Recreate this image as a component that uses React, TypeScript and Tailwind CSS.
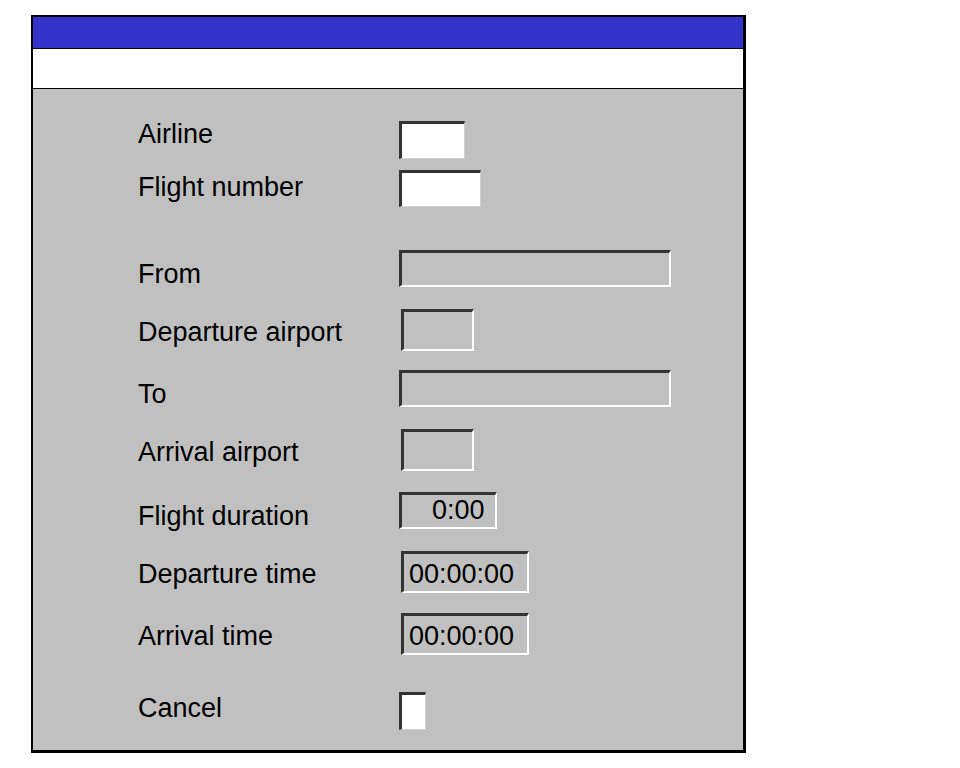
import React from "react";

type Row = {
  label: string;
  h: number;
  lt: number;
  it: number;
  ih: number;
  iw: number;
  ix: number;
  kind: "white" | "grey";
  text?: string;
  textCls?: string;
};

const rows: Row[] = [
  { label: "Airline", h: 70, lt: 30, it: 32, ih: 38, iw: 66, ix: 0, kind: "white" },
  { label: "Flight number", h: 48, lt: 13, it: 11, ih: 37, iw: 82, ix: 0, kind: "white" },
  { label: "From", h: 80, lt: 52, it: 43, ih: 37, iw: 272, ix: 0, kind: "grey" },
  { label: "Departure airport", h: 64, lt: 30, it: 22, ih: 42, iw: 73, ix: 2, kind: "grey" },
  { label: "To", h: 56, lt: 28, it: 19, ih: 37, iw: 272, ix: 0, kind: "grey" },
  { label: "Arrival airport", h: 64, lt: 30, it: 22, ih: 42, iw: 73, ix: 2, kind: "grey" },
  { label: "Flight duration", h: 58, lt: 30, it: 21, ih: 37, iw: 98, ix: 0, kind: "grey", text: "0:00", textCls: "pl-[30px] pt-0" },
  { label: "Departure time", h: 64, lt: 30, it: 22, ih: 42, iw: 128, ix: 2, kind: "grey", text: "00:00:00", textCls: "pl-[5px] pt-[5px]" },
  { label: "Arrival time", h: 62, lt: 28, it: 20, ih: 42, iw: 128, ix: 2, kind: "grey", text: "00:00:00", textCls: "pl-[5px] pt-[5px]" },
  { label: "Cancel", h: 76, lt: 38, it: 37, ih: 38, iw: 27, ix: 0, kind: "white" },
];

export default function App() {
  return (
    <div className="min-h-[768px] bg-white" style={{ fontFamily: '"Liberation Sans", Arial, sans-serif' }}>
      <div className="ml-[31px] pt-[15px]">
        <div className="w-[715px] h-[738px] border-t-[2px] border-l-[2px] border-r-[3px] border-b-[3px] border-black flex flex-col">
          <div className="h-[32px] bg-[#3333cc] border-b border-black" />
          <div className="h-[40px] bg-white border-b border-black" />
          <div className="flex-1 bg-[#c0c0c0] text-black text-[27px]">
            {rows.map((r) => (
              <div key={r.label} className="flex" style={{ height: r.h }}>
                <div className="w-[366px] pl-[105px] shrink-0" style={{ paddingTop: r.lt }}>
                  <span className="block leading-[30px] whitespace-nowrap">{r.label}</span>
                </div>
                <div
                  className={
                    r.kind === "white"
                      ? "shrink-0 bg-white border-t-[3px] border-l-[3px] border-r border-b border-t-[#333333] border-l-[#333333] border-r-[#d0d0d0] border-b-[#d0d0d0]"
                      : "shrink-0 bg-[#c0c0c0] border-t-[3px] border-l-[3px] border-r-[2px] border-b-[2px] border-t-[#333333] border-l-[#333333] border-r-white border-b-white"
                  }
                  style={{ marginTop: r.it, marginLeft: r.ix, width: r.iw, height: r.ih }}
                >
                  {r.text ? (
                    <span className={"block leading-[30px] whitespace-nowrap " + (r.textCls ?? "")}>{r.text}</span>
                  ) : null}
                </div>
              </div>
            ))}
          </div>
        </div>
      </div>
    </div>
  );
}
